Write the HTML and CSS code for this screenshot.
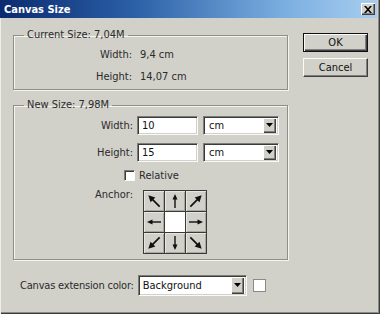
FILE: index.html
```html
<!DOCTYPE html>
<html>
<head>
<meta charset="utf-8">
<link rel="stylesheet" href="styles.css">
</head>
<body>
<div class="window">
  <div class="titlebar">
    <span class="title">Canvas Size</span>
    <span class="close">
      <svg width="8" height="7" viewBox="0 0 8 7"><path d="M0 0h2l2 2.2L6 0h2L5 3.5 8 7H6L4 4.8 2 7H0l3-3.5z" fill="#000"/></svg>
    </span>
  </div>
  <div class="content">
    <div class="main">
      <div class="left">
        <fieldset class="group g1">
          <legend>Current Size: 7,04M</legend>
          <div class="info-row"><span class="lbl">Width:</span><span class="val">9,4 cm</span></div>
          <div class="info-row"><span class="lbl">Height:</span><span class="val">14,07 cm</span></div>
        </fieldset>
        <fieldset class="group g2">
          <legend>New Size: 7,98M</legend>
          <div class="ctl-row">
            <span class="lbl2">Width:</span>
            <span class="field input">10</span>
            <span class="field select"><span class="sel-text">cm</span><span class="drop"><svg width="7" height="4" viewBox="0 0 7 4"><path d="M0 0h7L3.5 4z" fill="#000"/></svg></span></span>
          </div>
          <div class="ctl-row">
            <span class="lbl2">Height:</span>
            <span class="field input">15</span>
            <span class="field select"><span class="sel-text">cm</span><span class="drop"><svg width="7" height="4" viewBox="0 0 7 4"><path d="M0 0h7L3.5 4z" fill="#000"/></svg></span></span>
          </div>
          <div class="check-row">
            <span class="checkbox"></span><span class="check-text">Relative</span>
          </div>
          <div class="anchor-row">
            <span class="lbl2 anchor-lbl">Anchor:</span>
            <div class="anchor">
              <span class="cell"><svg width="20" height="20" viewBox="0 0 20 20"><g transform="rotate(-45 10 10)"><path d="M10 18V7" stroke="#111" stroke-width="1.7"/><path d="M10 2L6.6 8.5h6.8z" fill="#111"/></g></svg></span>
              <span class="cell"><svg width="20" height="20" viewBox="0 0 20 20"><path d="M10 17V7" stroke="#111" stroke-width="1.4"/><path d="M10 3L7.5 8.5h5z" fill="#111"/></svg></span>
              <span class="cell"><svg width="20" height="20" viewBox="0 0 20 20"><g transform="rotate(45 10 10)"><path d="M10 18V7" stroke="#111" stroke-width="1.7"/><path d="M10 2L6.6 8.5h6.8z" fill="#111"/></g></svg></span>
              <span class="cell"><svg width="20" height="20" viewBox="0 0 20 20"><g transform="rotate(-90 10 10)"><path d="M10 17V7" stroke="#111" stroke-width="1.4"/><path d="M10 3L7.5 8.5h5z" fill="#111"/></g></svg></span>
              <span class="cell center"></span>
              <span class="cell"><svg width="20" height="20" viewBox="0 0 20 20"><g transform="rotate(90 10 10)"><path d="M10 17V7" stroke="#111" stroke-width="1.4"/><path d="M10 3L7.5 8.5h5z" fill="#111"/></g></svg></span>
              <span class="cell"><svg width="20" height="20" viewBox="0 0 20 20"><g transform="rotate(-135 10 10)"><path d="M10 18V7" stroke="#111" stroke-width="1.7"/><path d="M10 2L6.6 8.5h6.8z" fill="#111"/></g></svg></span>
              <span class="cell"><svg width="20" height="20" viewBox="0 0 20 20"><g transform="rotate(180 10 10)"><path d="M10 17V7" stroke="#111" stroke-width="1.4"/><path d="M10 3L7.5 8.5h5z" fill="#111"/></g></svg></span>
              <span class="cell"><svg width="20" height="20" viewBox="0 0 20 20"><g transform="rotate(135 10 10)"><path d="M10 18V7" stroke="#111" stroke-width="1.7"/><path d="M10 2L6.6 8.5h6.8z" fill="#111"/></g></svg></span>
            </div>
          </div>
        </fieldset>
      </div>
      <div class="buttons">
        <button class="btn default">OK</button>
        <button class="btn">Cancel</button>
      </div>
    </div>
    <div class="ext-row">
      <span class="ext-lbl">Canvas extension color:</span>
      <span class="field select ext-select"><span class="sel-text">Background</span><span class="drop"><svg width="7" height="4" viewBox="0 0 7 4"><path d="M0 0h7L3.5 4z" fill="#000"/></svg></span></span>
      <span class="swatch"></span>
    </div>
  </div>
</div>
</body>
</html>
```
FILE: styles.css
```css
* { box-sizing: border-box; }
html, body { margin: 0; padding: 0; }
body {
  background: #d1d0c9;
  font-family: "DejaVu Sans Condensed", "DejaVu Sans", "Liberation Sans", sans-serif;
  font-size: 11px;
  color: #2b2b2b;
}
.window {
  width: 380px;
  height: 314px;
  background: #d1d0c9;
  box-shadow: inset 1px 0 0 #eeeeea, inset -1px -1px 0 #3c3c3c, inset -2px -2px 0 #8a8a86;
  overflow: hidden;
}
.titlebar {
  height: 18px;
  width: 377px;
  background: linear-gradient(to right, #0b2a6f 0%, #2a5fa6 35%, #7aaee0 75%, #a8cdf0 100%);
  display: flex;
  align-items: center;
  justify-content: space-between;
  padding: 0 2px 0 4px;
}
.title {
  color: #fff;
  font-weight: bold;
  font-size: 11px;
  font-family: "DejaVu Sans Condensed", "DejaVu Sans", sans-serif;
}
.close {
  width: 14px;
  height: 12px;
  background: #d1d0c9;
  display: flex;
  align-items: center;
  justify-content: center;
  box-shadow: inset 1px 1px 0 #fff, inset -1px -1px 0 #404040, inset -2px -2px 0 #808080;
}
.content {
  padding: 10px 0 0 13px;
}
.main {
  display: flex;
  gap: 15px;
}
.left {
  width: 275px;
  display: flex;
  flex-direction: column;
  gap: 8px;
}
.group {
  margin: 0;
  padding: 0;
  min-width: 0;
  border: 1px solid #8e8e88;
  box-shadow: 1px 1px 0 #f4f4f0, inset 1px 1px 0 #f4f4f0;
}
.group legend {
  margin-left: 10px;
  padding: 0 3px;
  line-height: 14px;
  height: 14px;
}
.g1 { padding: 1px 0 2px 0; }
.info-row {
  display: flex;
  height: 22px;
  align-items: center;
}
.lbl {
  width: 118px;
  text-align: right;
}
.val { margin-left: 8px; }

.g2 { padding: 4px 0 5px 0; }
.ctl-row {
  display: flex;
  align-items: center;
  height: 19px;
  margin-bottom: 8px;
}
.lbl2 {
  width: 119px;
  text-align: right;
  flex: none;
}
.field {
  height: 19px;
  background: #fff;
  border: 1px solid;
  border-color: #7c7c78 #fafafa #fafafa #7c7c78;
  box-shadow: inset 1px 1px 0 #3a3a3a, inset -1px -1px 0 #d1d0c9;
  color: #111;
  display: flex;
  align-items: center;
}
.input {
  width: 61px;
  margin-left: 4px;
  padding-left: 4px;
}
.select {
  width: 76px;
  margin-left: 5px;
  padding: 2px 2px 2px 5px;
  justify-content: space-between;
}
.drop {
  width: 13px;
  height: 15px;
  background: #d1d0c9;
  box-shadow: inset 1px 1px 0 #fff, inset -1px -1px 0 #404040, inset -2px -2px 0 #808080;
  display: flex;
  align-items: center;
  justify-content: center;
  padding-bottom: 1px;
}
.check-row {
  display: flex;
  align-items: center;
  height: 14px;
  margin-top: -2px;
  padding-left: 110px;
}
.checkbox {
  width: 11px;
  height: 11px;
  background: #fff;
  border: 1px solid;
  border-color: #7c7c78 #fafafa #fafafa #7c7c78;
  box-shadow: inset 1px 1px 0 #3a3a3a;
}
.check-text { margin-left: 4px; }
.anchor-row {
  display: flex;
  margin-top: 6px;
}
.anchor-lbl {
  line-height: 14px;
}
.anchor {
  margin-left: 10px;
  margin-top: 2px;
  display: grid;
  grid-template-columns: repeat(3, 20px);
  grid-template-rows: repeat(3, 20px);
  gap: 1px;
  padding: 1px;
  background: #3a3a38;
}
.cell {
  background: #d1d0c9;
  box-shadow: inset 1px 1px 0 #e6e6e2, inset -1px -1px 0 #a8a8a2;
  display: flex;
}
.cell.center { background: #fff; box-shadow: none; }

.buttons {
  display: flex;
  flex-direction: column;
  gap: 6px;
  margin-top: 5px;
}
.btn {
  width: 65px;
  height: 19px;
  font: inherit;
  color: #111;
  background: #d1d0c9;
  border: 1px solid;
  border-color: #fafafa #404040 #404040 #fafafa;
  box-shadow: inset -1px -1px 0 #808080;
  padding: 0;
}
.btn.default {
  border: 1px solid #111;
  box-shadow: inset 1px 1px 0 #fafafa, inset -1px -1px 0 #404040, inset -2px -2px 0 #808080;
}
.ext-row {
  display: flex;
  align-items: center;
  margin-top: 15px;
  padding-left: 7px;
}
.ext-lbl { letter-spacing: -0.2px; }
.ext-select {
  width: 109px;
  height: 21px;
  margin-left: 4px;
  padding-left: 4px;
}
.ext-select .drop { height: 17px; }
.swatch {
  width: 13px;
  height: 13px;
  margin-left: 6px;
  background: #fff;
  border: 1px solid #8a8a86;
}
```
